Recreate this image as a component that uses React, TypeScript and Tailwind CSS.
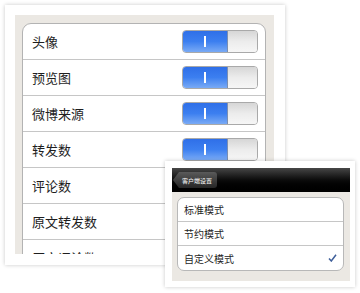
const font = { fontFamily: '"Noto Sans CJK SC", "Noto Sans", sans-serif' };

const rows = ["头像", "预览图", "微博来源", "转发数", "评论数", "原文转发数", "原文评论数"];
const withToggle = 4;

function Toggle() {
  return (
    <div className="flex h-[23px] w-[76px] overflow-hidden rounded-[4px] border border-[#a9a9a9]">
      <div className="flex w-[44px] items-center justify-center bg-gradient-to-b from-[#2f6fe8] via-[#3c7ff0] to-[#79aaf5]">
        <div className="h-[11px] w-[2px] bg-white" />
      </div>
      <div className="flex-1 border-l border-[#7c8fb0] bg-gradient-to-b from-[#d6d6d6] via-[#ececec] to-[#f6f6f6]" />
    </div>
  );
}

function SettingsPanel() {
  return (
    <div className="ml-[5px] mt-[5px] h-[260px] w-[280px] bg-white p-[10px] pb-[11px] pr-[11px] shadow-[0_0_4px_rgba(0,0,0,0.22)]">
      <div className="h-full overflow-hidden bg-[#ebe8e3] pl-[7px] pr-[8px] pt-[8px]">
        <div className="rounded-t-[9px] border border-[#b3b3b3] bg-white">
          {rows.map((label, i) => (
            <div
              key={label}
              className="flex h-[36px] items-center justify-between border-b border-[#c6c6c6] pl-[9px] pr-[7px] text-[13px] text-[#1e1e1e]"
            >
              <span>{label}</span>
              {i < withToggle && <Toggle />}
            </div>
          ))}
        </div>
      </div>
    </div>
  );
}

function ModePanel() {
  const modes = ["标准模式", "节约模式", "自定义模式"];
  return (
    <div className="absolute left-[165px] top-[161px] h-[126px] w-[190px] bg-white p-[7px] pb-[6px] pr-[5px] shadow-[0_0_4px_rgba(0,0,0,0.22)]">
      <div className="flex h-full flex-col">
        <div className="flex h-[24px] items-center bg-gradient-to-b from-[#474747] via-[#0c0c0c] to-black pl-[1px]">
          <div className="flex h-[16px] items-center bg-gradient-to-b from-[#5a5a5a] to-[#262626] pl-[9px] pr-[5px] text-[6px] text-white [clip-path:polygon(6px_0,100%_0,100%_100%,6px_100%,0_50%)] rounded-r-[3px]">
            客户端设置
          </div>
        </div>
        <div className="flex-1 bg-[#ebe8e3] pb-[10px] pl-[5px] pr-[6px] pt-[5px]">
          <div className="overflow-hidden rounded-[7px] border border-[#b8b8b8] bg-white">
            {modes.map((m, i) => (
              <div
                key={m}
                className={`flex h-[24px] items-center justify-between pl-[6px] pr-[6px] text-[10px] text-[#1e1e1e] ${i < 2 ? "border-b border-[#c6c6c6]" : ""}`}
              >
                <span>{m}</span>
                {i === 2 && (
                  <svg width="9" height="8" viewBox="0 0 9 8">
                    <path d="M1 4.5 L3.3 7 L8 0.8" fill="none" stroke="#3f5f9a" strokeWidth="1.5" />
                  </svg>
                )}
              </div>
            ))}
          </div>
        </div>
      </div>
    </div>
  );
}

export default function App() {
  return (
    <div className="relative h-[293px] w-[360px] overflow-hidden bg-white pt-[0px]" style={font}>
      <div className="pt-[0px]">
        <SettingsPanel />
      </div>
      <ModePanel />
    </div>
  );
}
